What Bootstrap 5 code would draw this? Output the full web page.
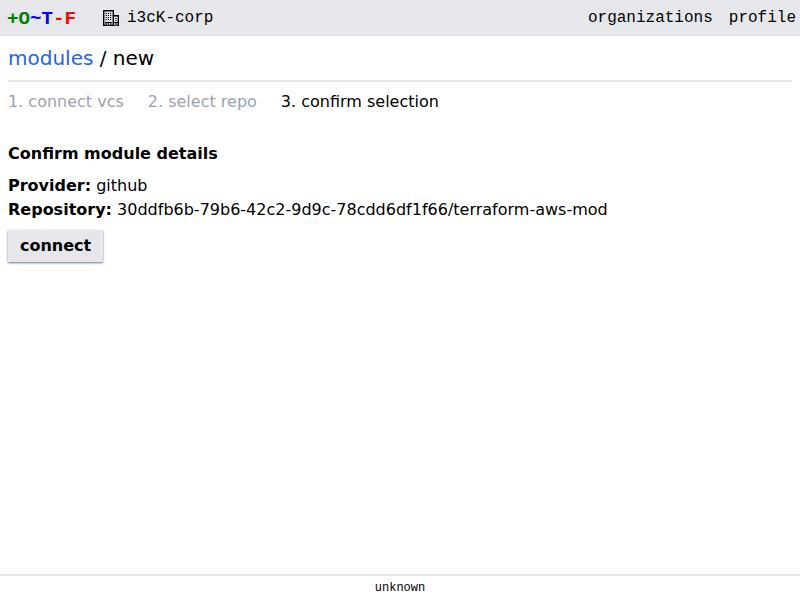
<!DOCTYPE html>
<html lang="en">
<head>
<meta charset="utf-8">
<title>new module</title>
<link href="https://cdn.jsdelivr.net/npm/bootstrap@5.3.0/dist/css/bootstrap.min.css" rel="stylesheet">
<style>
body{font-family:"DejaVu Sans",sans-serif;font-size:16px;line-height:24px;color:#000;background:#fff}
.mono{font-family:"Liberation Mono",monospace}
.topbar{background:#e5e7eb;height:36px}
.topbar a,.crumbs a{text-decoration:none}
.topbar a{color:#000}
.brand-text{font-size:19.2px;line-height:28px;width:68px;margin-left:7px;margin-right:28px;padding-top:2px}
.g{color:#008000}.b{color:#00f}.r{color:#f00}
.crumbs{font-size:20px;line-height:28px;padding:8px 0;border-bottom:2px solid #e5e7eb}
.crumbs a{color:#2563eb}
.steps{color:#9ca3af;margin-top:8px}
.steps .current{color:#000}
.btn-connect{background:#e5e7eb;color:#000;font-weight:700;line-height:24px;padding:4px 12px;border:0;border-radius:0;box-shadow:0 1px 2px 0 #64748b}
.foot{border-top:2px solid #e5e7eb;font-size:12px;line-height:16px}
</style>
</head>
<body class="d-flex flex-column min-vh-100">
<header class="topbar mono d-flex align-items-center flex-shrink-0">
<a href="#" class="brand-text fw-bold text-nowrap"><span class="g">+O</span><span class="b">~T</span><span class="r">-F</span></a>
<a href="#" class="d-flex align-items-center gap-2">
<svg width="16" height="16" viewBox="0 0 16 16" fill="none" stroke="#000"><path d="M.7 16V.7h9.600V16M10.300 5.700h5V16" stroke-width="1.400"/><path d="M0 15.400h4.500M6.200 15.400h5.500M13.500 15.400h2.500" stroke-width="1.200"/><path d="M2 12.500h6.800M3 12v4M5.300 12v4M7.800 12v4M11 12.500h4M12.900 12v4" stroke-width="1.100"/><path stroke-width="1.200" d="M2.600 3.500h1.200M4.800 3.500h1.200M7 3.500h1.200M2.600 5.500h1.200M4.800 5.500h1.200M7 5.500h1.200M2.600 7.500h1.200M4.800 7.500h1.200M7 7.500h1.200M2.600 9.500h1.200M4.800 9.500h1.200M7 9.500h1.200M12.300 8.500h1.200M12.300 10.500h1.200"/></svg>
<span>i3cK-corp</span></a>
<nav class="d-flex gap-3 ms-auto pe-1"><a href="#">organizations</a><a href="#">profile</a></nav>
</header>
<main class="px-2 flex-grow-1">
<div class="crumbs"><a href="#">modules</a> / new</div>
<div class="steps d-flex gap-4"><span>1. connect vcs</span><span>2. select repo</span><span class="current">3. confirm selection</span></div>
<div class="fw-bold mt-4 pt-1 mb-2">Confirm module details</div>
<div><b>Provider:</b> github</div>
<div><b>Repository:</b> 30ddfb6b-79b6-42c2-9d9c-78cdd6df1f66/terraform-aws-mod</div>
<button class="btn btn-connect mt-2">connect</button>
</main>
<footer class="foot mono text-center py-1">unknown</footer>
<script src="https://cdn.jsdelivr.net/npm/bootstrap@5.3.0/dist/js/bootstrap.bundle.min.js"></script>
</body>
</html>
